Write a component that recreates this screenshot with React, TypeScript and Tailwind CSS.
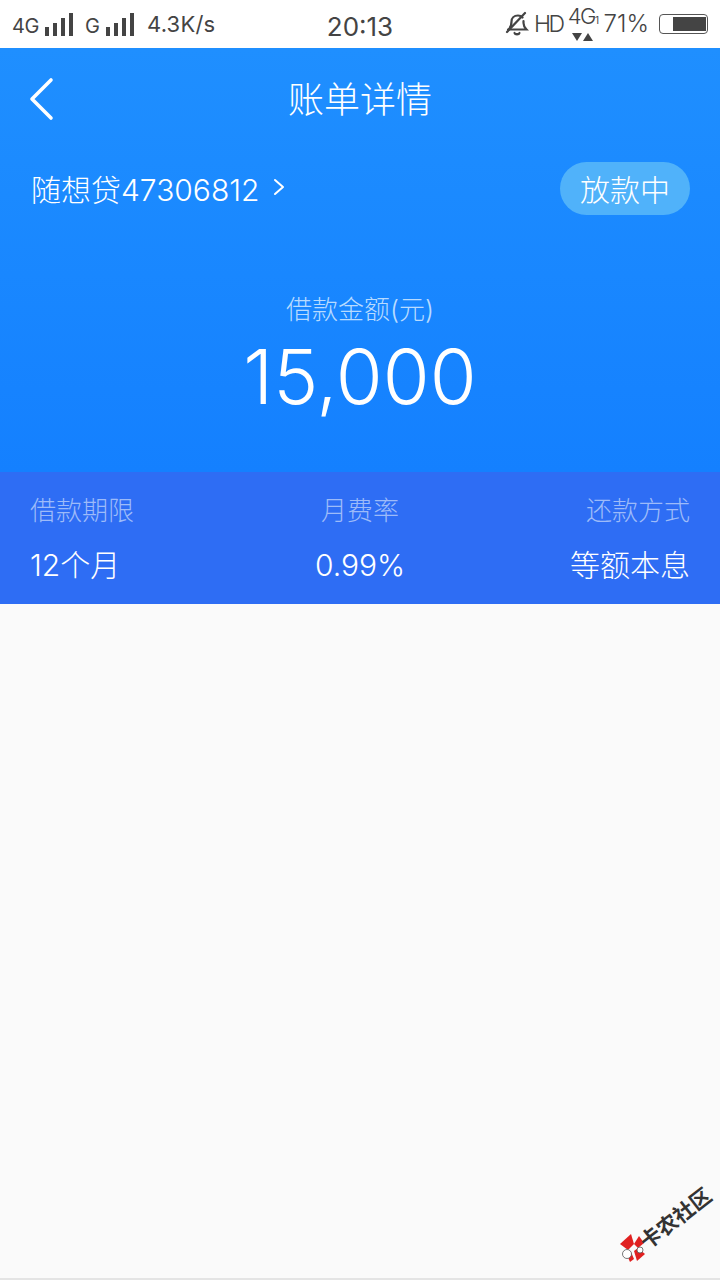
import React from 'react';

const Signal: React.FC = () => (
  <div className="flex items-end gap-[4px] h-[23px]">
    <div className="w-[4px] h-[9px] bg-[#444]" />
    <div className="w-[4px] h-[13px] bg-[#444]" />
    <div className="w-[4px] h-[18px] bg-[#444]" />
    <div className="w-[4px] h-[23px] bg-[#444]" />
  </div>
);

const MutedBell: React.FC = () => (
  <svg width="24" height="26" viewBox="0 0 24 26" fill="none" stroke="#444" strokeWidth="2.2" strokeLinecap="round">
    <path d="M4 18c2-2 2.5-4 2.5-7.5C6.500 7 9 4.500 13 4.500c2 0 3.500 .8 4.500 2" />
    <path d="M18.500 10v2c0 3 1 4.500 3 6.500H3" />
    <path d="M2 21L20 2" />
    <path d="M9.500 22c.6 2 4.400 2 5 0" fill="#444" />
  </svg>
);

const Logo: React.FC = () => (
  <svg width="28" height="30" viewBox="0 0 28 30">
    <path d="M1 11L12 1l3 10-6 6z" fill="#e02020" />
    <path d="M15 11l5-8 5 7-6 5z" fill="#e02020" />
    <path d="M8 22l4-3 3 7-4 3z" fill="#e02020" />
    <path d="M15 18l4-3 7 6-8 7z" fill="#e02020" />
    <circle cx="8" cy="21" r="4.500" fill="#fff" stroke="#555" strokeWidth="0.8" />
    <circle cx="21" cy="17" r="3" fill="#fff" stroke="#555" strokeWidth="0.8" />
  </svg>
);

const App: React.FC = () => {
  return (
    <div className="w-[720px] h-[1280px] flex flex-col bg-[#fafafa] overflow-hidden relative font-['Inter','Noto_Sans_CJK_SC',sans-serif]">
      {/* status bar */}
      <div className="h-[48px] bg-white flex items-center justify-between pl-[12px] pr-[12px] text-[#444]">
        <div className="flex items-center w-[270px]">
          <span className="text-[20px] w-[33px] tracking-[-0.5px] mt-[3px]">4G</span>
          <Signal />
          <span className="text-[20px] ml-[12px] w-[21px] mt-[3px]">G</span>
          <Signal />
          <span className="text-[22px] ml-[13px] tracking-[0.2px]">4.3K/s</span>
        </div>
        <span className="text-[26px] mt-[4px]">20:13</span>
        <div className="flex items-center justify-end w-[270px]">
          <MutedBell />
          <span className="text-[23px] ml-[5px] font-light tracking-[-2.5px]">HD</span>
          <div className="relative w-[34px] h-[38px] ml-[3px] flex flex-col items-center">
            <span className="text-[22px] leading-[23px] tracking-[-1.5px] font-light">
              4G<span className="text-[10px] font-normal">1</span>
            </span>
            <div className="flex gap-[1px] mt-[1px]">
              <div className="w-0 h-0 border-l-[5px] border-r-[5px] border-t-[8px] border-l-transparent border-r-transparent border-t-[#444]" />
              <div className="w-0 h-0 border-l-[5px] border-r-[5px] border-b-[8px] border-l-transparent border-r-transparent border-b-[#444]" />
            </div>
          </div>
          <span className="text-[24px] ml-[4px] mr-[10px] font-light">71%</span>
          <div className="w-[49px] h-[20px] border border-[#555] rounded-[4px] flex justify-end pr-[1px] py-[2px]">
            <div className="w-[33px] bg-[#444]" />
          </div>
        </div>
      </div>

      {/* header */}
      <div className="h-[424px] bg-gradient-to-b from-[#1f8fff] to-[#1480ff] text-white flex flex-col">
        <div className="h-[102px] flex items-center justify-center relative">
          <svg width="26" height="44" viewBox="0 0 26 44" fill="none" stroke="white" strokeWidth="3.6" strokeLinecap="round" strokeLinejoin="round" className="absolute left-[28px] top-[29px]">
            <path d="M23 3L4 22l19 19" />
          </svg>
          <span className="text-[36px] font-light mt-[2px]">账单详情</span>
        </div>
        <div className="flex items-center justify-between pl-[31px] pr-[30px] h-[77px]">
          <div className="flex items-center mt-[3px]">
            <span className="text-[30px] font-light">随想贷47306812</span>
            <svg width="12" height="18" viewBox="0 0 12 18" fill="none" stroke="white" strokeWidth="2" strokeLinecap="round" strokeLinejoin="round" className="ml-[14px] mb-[6px]">
              <path d="M2 2l8 7-8 7" />
            </svg>
          </div>
          <div className="w-[130px] h-[53px] rounded-full bg-[#50b2fa] flex items-center justify-center text-[30px] font-light pt-[3px]">放款中</div>
        </div>
        <div className="flex flex-col items-center mt-[63px]">
          <span className="text-[26px] font-light text-[#b8dbff]">借款金额(元)</span>
          <span className="text-[76px] leading-[84px] font-light mt-[5px]">15,000</span>
        </div>
      </div>

      {/* terms */}
      <div className="h-[132px] bg-[#2e6df4] px-[30px] pt-[3px] grid grid-cols-3 content-center gap-y-[13px]">
        <span className="text-[26px] font-light text-[#9dbbf9]">借款期限</span>
        <span className="text-[26px] font-light text-[#9dbbf9] text-center">月费率</span>
        <span className="text-[26px] font-light text-[#9dbbf9] text-right">还款方式</span>
        <span className="text-[30px] font-light text-white">12个月</span>
        <span className="text-[30px] font-light text-white text-center">0.99%</span>
        <span className="text-[30px] font-light text-white text-right">等额本息</span>
      </div>
      <div className="flex-1" />
      <div className="h-[2px] bg-[#e4e4e4]" />

      {/* watermark */}
      <div className="absolute left-[619px] top-[1233px] w-[28px] h-[30px]">
        <Logo />
      </div>
      <span className="absolute left-[632px] top-[1204px] w-[88px] text-center text-[21px] font-bold text-[#333] -rotate-[38deg] leading-[30px] whitespace-nowrap">卡农社区</span>
    </div>
  );
};

export default App;
